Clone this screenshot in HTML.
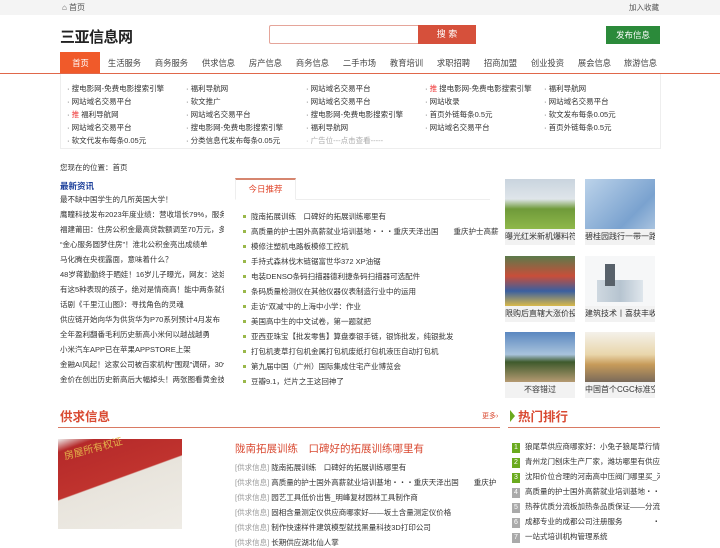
<!DOCTYPE html>
<html><head><meta charset="utf-8"><style>
*{margin:0;padding:0;box-sizing:border-box}
body{width:720px;height:540px;overflow:hidden;background:#fff;font-family:"Liberation Sans","Noto Sans CJK SC",sans-serif;color:#333;position:relative;font-size:7.5px}
.a{position:absolute;white-space:nowrap}
.top{position:absolute;left:0;top:0;width:720px;height:15px;background:#f4f4f4}
.nav span{position:absolute;top:52px;height:22px;line-height:22px;font-size:8.3px;color:#444;text-align:center;width:47px}
.lk div{position:absolute;font-size:7.5px;color:#333}
.ls div{position:absolute;left:60px;width:164px;overflow:hidden;font-size:7.5px;color:#333;white-space:nowrap}
.rec div{position:absolute;left:251px;font-size:7.5px;color:#333;white-space:nowrap}
.rec div:before{content:"";position:absolute;left:-8px;top:4px;width:3px;height:3px;background:#9ab84a}
.pic{position:absolute;width:70px;height:50px}
.cap{position:absolute;width:70px;height:16px;background:#f2f2f2;font-size:8px;text-align:center;line-height:16px;overflow:hidden;white-space:nowrap}
.gq div{position:absolute;left:235px;font-size:7.5px;white-space:nowrap;color:#333}
.gq span{color:#999}
.hot div{position:absolute;left:512px;width:148px;overflow:hidden;font-size:7.5px;white-space:nowrap;color:#333}
.hot b{display:inline-block;width:8px;height:10px;background:#aaa;color:#fff;text-align:center;line-height:10px;font-weight:normal;margin-right:5px;font-size:7px}
.hot b.g{background:#6aaa1e}
</style></head><body>
<div class="top"></div>
<div class="a" style="left:62px;top:2px;font-size:8px;color:#555">⌂ 首页</div>
<div class="a" style="left:629px;top:2px;font-size:7.5px;color:#555">加入收藏</div>
<div class="a" style="left:60px;top:26px;font-size:15px;font-weight:bold;color:#222;letter-spacing:-0.5px">三亚信息网</div>
<div class="a" style="left:269px;top:25px;width:150px;height:19px;border:1px solid #e5a59a;border-right:none;border-radius:2px 0 0 2px"></div>
<div class="a" style="left:418px;top:25px;width:58px;height:19px;background:#d6503b;color:#fff;font-size:9px;text-align:center;line-height:19px">搜 索</div>
<div class="a" style="left:606px;top:26px;width:54px;height:18px;background:#2b8a3a;color:#fff;font-size:8.5px;text-align:center;line-height:18px">发布信息</div>
<div class="nav">
<div class="a" style="left:60px;top:52px;width:40px;height:22px;background:#f05a2a"></div>
<span style="left:57px;color:#fff">首页</span><span style="left:101px">生活服务</span><span style="left:148px">商务服务</span><span style="left:195px">供求信息</span><span style="left:242px">房产信息</span><span style="left:289px">商务信息</span><span style="left:336px">二手市场</span><span style="left:383px">教育培训</span><span style="left:430px">求职招聘</span><span style="left:477px">招商加盟</span><span style="left:524px">创业投资</span><span style="left:571px">展会信息</span><span style="left:617px">旅游信息</span>
</div>
<div class="a" style="left:0;top:73px;width:720px;height:1px;background:#e0674a"></div>
<div class="a" style="left:60px;top:74px;width:601px;height:75px;border:1px solid #eee;border-top:none"></div>
<div class="lk">
<div style="left:67px;top:83px">· 搜电影网-免费电影搜索引擎</div><div style="left:186px;top:83px">· 福利导航网</div><div style="left:306px;top:83px">· 网站域名交易平台</div><div style="left:425px;top:83px">· <span style="color:#e33">推</span> 搜电影网-免费电影搜索引擎</div><div style="left:544px;top:83px">· 福利导航网</div>
<div style="left:67px;top:96px">· 网站域名交易平台</div><div style="left:186px;top:96px">· 软文推广</div><div style="left:306px;top:96px">· 网站域名交易平台</div><div style="left:425px;top:96px">· 网站收录</div><div style="left:544px;top:96px">· 网站域名交易平台</div>
<div style="left:67px;top:109px">· <span style="color:#e33">推</span> 福利导航网</div><div style="left:186px;top:109px">· 网站域名交易平台</div><div style="left:306px;top:109px">· 搜电影网-免费电影搜索引擎</div><div style="left:425px;top:109px">· 首页外链每条0.5元</div><div style="left:544px;top:109px">· 软文发布每条0.05元</div>
<div style="left:67px;top:122px">· 网站域名交易平台</div><div style="left:186px;top:122px">· 搜电影网-免费电影搜索引擎</div><div style="left:306px;top:122px">· 福利导航网</div><div style="left:425px;top:122px">· 网站域名交易平台</div><div style="left:544px;top:122px">· 首页外链每条0.5元</div>
<div style="left:67px;top:135px">· 软文代发布每条0.05元</div><div style="left:186px;top:135px">· 分类信息代发布每条0.05元</div><div style="left:306px;top:135px;color:#aaa">· 广告位---点击查看-----</div>
</div>
<div class="a" style="left:60px;top:162px;font-size:7.5px">您现在的位置：首页</div>
<div class="a" style="left:60px;top:180px;font-size:8.5px;font-weight:bold;color:#1a3e9a">最新资讯</div>
<div class="ls">
<div style="top:194px">最不缺中国学生的几所英国大学！</div>
<div style="top:209px">鹰瞳科技发布2023年度业绩：营收增长79%，服务683</div>
<div style="top:224px">福建莆田：住房公积金最高贷款额调至70万元，多子</div>
<div style="top:239px">“金心服务圆梦住房”！淮北公积金亮出成绩单</div>
<div style="top:254px">马化腾在央视露面，意味着什么？</div>
<div style="top:269px">48岁蒋勤勤终于晒娃！16岁儿子曝光，网友：这娃养</div>
<div style="top:284px">有这5种表现的孩子，绝对是情商高！能中两条就很</div>
<div style="top:299px">话剧《千里江山图》：寻找角色的灵魂</div>
<div style="top:314px">供应链开始向华为供货华为P70系列预计4月发布</div>
<div style="top:329px">全年盈利翻番毛利历史新高小米何以越战越勇</div>
<div style="top:344px">小米汽车APP已在苹果APPSTORE上架</div>
<div style="top:359px">金融AI风起！这家公司被百家机构“围观”调研，30亿</div>
<div style="top:374px">金价在创出历史新高后大幅掉头！两张图看黄金技术</div>
</div>
<div class="a" style="left:235px;top:199px;width:255px;height:1px;background:#eee"></div>
<div class="a" style="left:235px;top:178px;width:61px;height:22px;border:1px solid #eee;border-top:2px solid #d6866f;border-bottom:1px solid #fff;background:#fff;color:#e0452a;font-size:8.5px;text-align:center;line-height:19px">今日推荐</div>
<div class="rec">
<div style="top:211px">陇南拓展训练　口碑好的拓展训练哪里有</div>
<div style="top:226px">高质量的护士国外高薪就业培训基地・・・重庆天泽出国　　重庆护士高薪</div>
<div style="top:241px">模修注塑机电路板模修工控机</div>
<div style="top:256px">手持式森林伐木链锯富世华372 XP油锯</div>
<div style="top:271px">电装DENSO条码扫描器德利捷条码扫描器可选配件</div>
<div style="top:286px">条码质量检测仪在其他仪器仪表制造行业中的运用</div>
<div style="top:301px">走访“双减”中的上海中小学：作业</div>
<div style="top:316px">美国高中生的中文试卷，第一题就把</div>
<div style="top:331px">亚西亚珠宝【批发零售】算盘泰银手链，银饰批发，纯银批发</div>
<div style="top:346px">打包机麦草打包机金属打包机废纸打包机液压自动打包机</div>
<div style="top:361px">第九届中国（广州）国际集成住宅产业博览会</div>
<div style="top:376px">豆瓣9.1，烂片之王这回神了</div>
</div>
<div class="pic" style="left:505px;top:179px;background:linear-gradient(#c9d4de 0,#dfe5ea 40%,#6f9a3a 60%,#8fb84a 100%)"></div>
<div class="cap" style="left:505px;top:229px">曝光红米新机爆料符运</div>
<div class="pic" style="left:585px;top:179px;background:linear-gradient(135deg,#bcd3ea,#7aa2cf 70%,#a9c3df)"></div>
<div class="cap" style="left:585px;top:229px">碧桂园践行一带一路战</div>
<div class="pic" style="left:505px;top:256px;background:linear-gradient(#5b7a4b,#c84e3a 40%,#3a5fa0 70%,#d9b94a)"></div>
<div class="cap" style="left:505px;top:306px">限购后直辖大涨价投资</div>
<div class="pic" style="left:585px;top:256px;background:#f6f7f8"><div style="position:absolute;left:12px;top:24px;width:46px;height:22px;background:linear-gradient(90deg,#cfd8e0,#b6c4d0,#dfe6ec)"></div><div style="position:absolute;left:20px;top:8px;width:10px;height:22px;background:#58616a"></div></div>
<div class="cap" style="left:585px;top:306px">建筑技术丨喜获丰收满</div>
<div class="pic" style="left:505px;top:332px;background:linear-gradient(#5a87c0,#a9c3dc 45%,#3e5a2c 60%,#b59a72)"></div>
<div class="cap" style="left:505px;top:382px">不容错过</div>
<div class="pic" style="left:585px;top:332px;background:linear-gradient(#f4f1ea,#e9d6ab 45%,#c79b5a 65%,#7a6a5a)"></div>
<div class="cap" style="left:585px;top:382px">中国首个CGC标准空</div>
<div class="a" style="left:60px;top:406px;font-size:12.5px;font-weight:bold;color:#d94a32">供求信息</div>
<div class="a" style="left:482px;top:411px;font-size:7px;color:#d94a32">更多›</div>
<div class="a" style="left:58px;top:427px;width:442px;height:1px;background:#d97a63"></div>
<div class="a" style="left:58px;top:439px;width:124px;height:90px;background:linear-gradient(160deg,#eee 0,#b52a2a 10%,#c0332e 45%,#e8e4dc 46%,#efece6 100%)"></div>
<div class="a" style="left:62px;top:448px;font-size:10px;color:#e3b24a;transform:rotate(-15deg);transform-origin:left top">房屋所有权证</div>
<div class="a" style="left:235px;top:441px;font-size:10.5px;color:#d94a32">陇南拓展训练　口碑好的拓展训练哪里有</div>
<div class="gq">
<div style="top:462px"><span>[供求信息]</span> 陇南拓展训练　口碑好的拓展训练哪里有</div>
<div style="top:477px"><span>[供求信息]</span> 高质量的护士国外高薪就业培训基地・・・重庆天泽出国　　重庆护</div>
<div style="top:492px"><span>[供求信息]</span> 园艺工具低价出售_明峰复材园林工具制作商</div>
<div style="top:507px"><span>[供求信息]</span> 固相含量测定仪供应商哪家好——坂土含量测定仪价格</div>
<div style="top:522px"><span>[供求信息]</span> 制作快速样件建筑模型就找黑量科技3D打印公司</div>
<div style="top:537px"><span>[供求信息]</span> 长期供应湖北仙人掌</div>
</div>
<div class="a" style="left:510px;top:410px;width:0;height:0;border-left:5px solid #6aaa1e;border-top:6px solid transparent;border-bottom:6px solid transparent"></div>
<div class="a" style="left:518px;top:406px;font-size:12.5px;font-weight:bold;color:#d94a32">热门排行</div>
<div class="a" style="left:508px;top:427px;width:152px;height:1px;background:#d97a63"></div>
<div class="hot">
<div style="top:441px"><b class="g">1</b>狼尾草供应商哪家好：小兔子狼尾草行情</div>
<div style="top:456px"><b class="g">2</b>青州龙门刨床生产厂家，潍坊哪里有供应专</div>
<div style="top:471px"><b class="g">3</b>沈阳价位合理的河南高中压阀门哪里买_河</div>
<div style="top:486px"><b>4</b>高质量的护士国外高薪就业培训基地・・・</div>
<div style="top:501px"><b>5</b>热荐优质分流板加热条品质保证——分流板</div>
<div style="top:516px"><b>6</b>成都专业的成都公司注册服务　　　　・成</div>
<div style="top:531px"><b>7</b>一站式培训机构管理系统</div>
</div>
</body></html>
